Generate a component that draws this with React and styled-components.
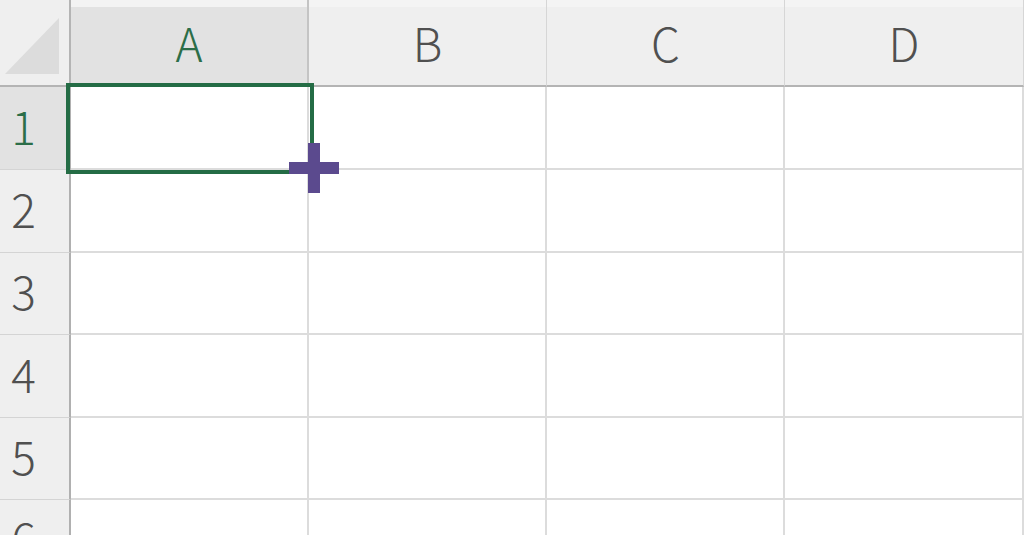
import React from "react";
import styled, { createGlobalStyle } from "styled-components";

const Global = createGlobalStyle`
  html, body { margin: 0; padding: 0; background: #ffffff; overflow: hidden; }
  body { font-family: "Noto Sans CJK JP", "Noto Sans", sans-serif; }
`;

const Sheet = styled.div`
  position: relative;
  width: 1024px;
  height: 535px;
  overflow: hidden;
  display: grid;
  grid-template-columns: 71px 238px 238px 238px 1fr;
  grid-template-rows: 87px 83px 83px 82px 83px 82px 82px;
  background: #fff;
`;

const Corner = styled.div`
  background: #efefef;
  border-right: 2px solid #b4b4b4;
  border-bottom: 2px solid #b4b4b4;
  box-sizing: border-box;
  display: flex;
  align-items: flex-end;
  justify-content: flex-end;
  padding: 0 10px 11px 0;
`;

const ColHead = styled.div`
  box-sizing: border-box;
  background: ${(p) =>
    p.$active
      ? "linear-gradient(#f3f3f3 0 7px, #e2e2e2 7px)"
      : "linear-gradient(#f4f4f4 0 7px, #efefef 7px)"};
  border-bottom: 2px solid #b4b4b4;
  border-right: ${(p) => (p.$active ? "2px solid #c4c4c4" : "1px solid #d6d6d6")};
  display: flex;
  align-items: center;
  justify-content: center;
  padding-bottom: 2px;
  font-size: 46px;
  font-weight: 300;
  color: ${(p) => (p.$active ? "#2c6e48" : "#505050")};
  line-height: 1;
`;

const RowHead = styled.div`
  box-sizing: border-box;
  background: ${(p) => (p.$active ? "#e2e2e2" : "#efefef")};
  border-right: 2px solid #b0b0b0;
  border-bottom: 1px solid #d4d4d4;
  display: flex;
  align-items: center;
  justify-content: center;
  padding-right: 22px;
  padding-bottom: 7px;
  font-size: 46px;
  font-weight: 300;
  color: ${(p) => (p.$active ? "#2c6e48" : "#505050")};
  line-height: 1;
`;

const Cell = styled.div`
  box-sizing: border-box;
  background: #fff;
  border-right: 2px solid #dcdcdc;
  border-bottom: 2px solid #dcdcdc;
`;

const Selection = styled.div`
  position: absolute;
  left: 66px;
  top: 83px;
  width: 248px;
  height: 91px;
  box-sizing: border-box;
  border: 4px solid #246c45;
  pointer-events: none;
`;

const Cursor = styled.svg`
  position: absolute;
  left: 289px;
  top: 143px;
  pointer-events: none;
`;

const cols = ["A", "B", "C", "D"];
const rows = [1, 2, 3, 4, 5, 6];

export default function App() {
  return (
    <>
      <Global />
      <Sheet>
        <Corner>
          <svg width="54" height="56" viewBox="0 0 54 56">
            <polygon points="0,56 54,0 54,56" fill="#dcdcdc" />
          </svg>
        </Corner>
        {cols.map((c, i) => (
          <ColHead key={c} $active={i === 0}>
            {c}
          </ColHead>
        ))}
        {rows.map((r) => (
          <React.Fragment key={r}>
            <RowHead $active={r === 1}>{r}</RowHead>
            {cols.map((c) => (
              <Cell key={c + r} />
            ))}
          </React.Fragment>
        ))}
        <Selection />
        <Cursor width="50" height="50" viewBox="0 0 50 50">
          <path
            d="M19 0h12v19h19v12H31v19H19V31H0V19h19z"
            fill="#5b4a8e"
          />
        </Cursor>
      </Sheet>
    </>
  );
}
